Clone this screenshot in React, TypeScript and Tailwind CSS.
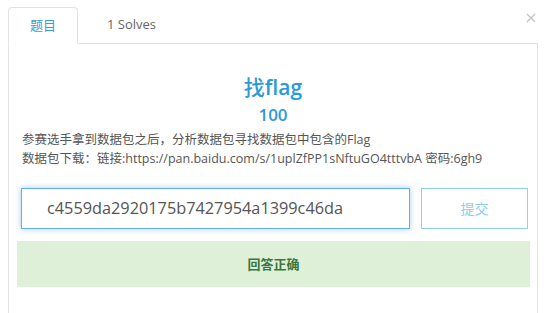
import React from "react";

export default function App() {
  const font = { fontFamily: '"Open Sans","Noto Sans CJK SC",sans-serif' };
  return (
    <div className="relative h-[313px] w-[554px] overflow-hidden bg-white" style={font}>
      <button className="absolute right-[18px] top-[13px] flex h-[10px] w-[10px] items-center justify-center">
        <svg width="10" height="10" viewBox="0 0 10 10">
          <path d="M1 1L9 9M9 1L1 9" stroke="#c4c4c4" strokeWidth="1.4" />
        </svg>
      </button>
      <div className="w-[538px] pl-[8px] pt-[7px]">
        <div className="flex border-b border-[#e3e3e3]">
          <div className="-mb-px flex h-[37px] w-[70px] items-center justify-center rounded-t-[4px] border border-[#e3e3e3] border-b-white bg-white text-[13px] text-[#3a9ad9]">
            题目
          </div>
          <div className="flex h-[36px] items-center pl-[29px] text-[13px] text-[#666]">1 Solves</div>
        </div>
        <div className="h-[270px] border-x border-[#e3e3e3]">
          <div className="pt-[27px] text-center text-[21px] font-semibold leading-[32px] text-[#2b9ad6]">
            <span className="font-medium">找</span>flag
          </div>
          <div className="text-center text-[17px] font-semibold leading-[24px] text-[#2b9ad6]">100</div>
          <div className="mt-[3px] pl-[13px] text-[12.5px] leading-[19px] text-[#555]">
            <div>参赛选手拿到数据包之后，分析数据包寻找数据包中包含的Flag</div>
            <div>数据包下载：链接:https://pan.baidu.com/s/1uplZfPP1sNftuGO4tttvbA 密码:6gh9</div>
          </div>
          <div className="mt-[20px] flex gap-[11px] pl-[12px]">
            <div className="flex h-[41px] w-[389px] items-center border border-[#66afe9] pl-[25px] text-[16.3px] text-[#555] shadow-[0_0_6px_rgba(102,175,233,0.6)]">
              c4559da2920175b7427954a1399c46da
            </div>
            <div className="flex h-[41px] w-[107px] items-center justify-center border border-[#8fd1ef] text-[14px] text-[#8dcdeb]">
              提交
            </div>
          </div>
          <div className="ml-[8px] mr-[7px] mt-[12px] flex h-[46px] items-center justify-center bg-[#dff0d8] pt-[1px] text-[13px] font-bold text-[#3c763d]">
            回答正确
          </div>
        </div>
      </div>
    </div>
  );
}
